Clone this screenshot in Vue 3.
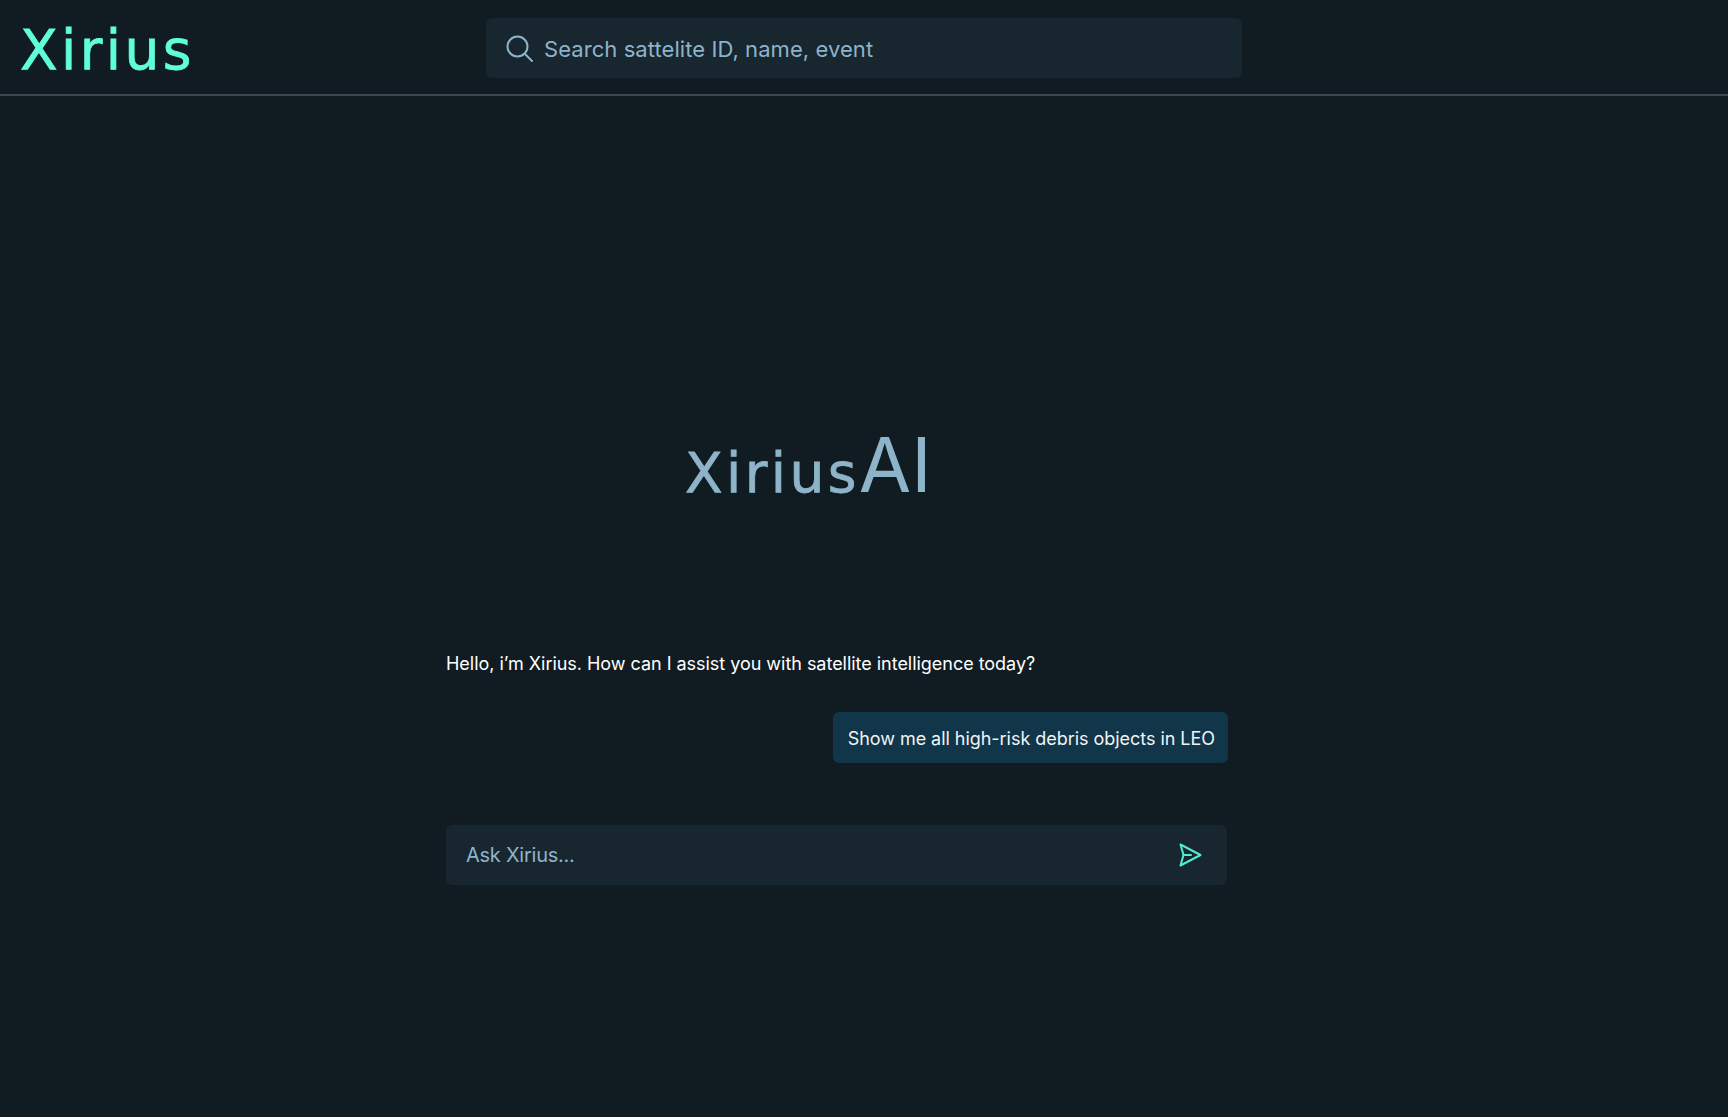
<script setup>
const placeholder = 'Search sattelite ID, name, event'
</script>

<template>
  <div class="page">
    <header class="top">
      <div class="logo">Xirius</div>
      <div class="search">
        <svg class="search-icon" width="27" height="27" viewBox="0 0 27 27" fill="none" stroke="#8db4c9" stroke-width="2" stroke-linecap="round">
          <circle cx="11.5" cy="11.5" r="10" />
          <path d="M19 19 L26 26" />
        </svg>
        <span class="search-text">{{ placeholder }}</span>
      </div>
    </header>
    <main class="chat">
      <h1 class="title"><span class="title-brand">Xirius</span><span class="title-ai">AI</span></h1>
      <p class="hello">Hello, i’m Xirius. How can I assist you with satellite intelligence today?</p>
      <div class="bubble-row"><div class="bubble">Show me all high-risk debris objects in LEO</div></div>
      <div class="ask">
        <span class="ask-text">Ask Xirius...</span>
        <svg width="24" height="26" viewBox="0 0 24 26" fill="none" stroke="#54ecd0" stroke-width="2" stroke-linejoin="round" stroke-linecap="round">
          <path d="M2.5 2.5 L22.5 13 L2.5 23.5 L5.5 13 Z" />
          <path d="M5.5 13 L13 13" />
        </svg>
      </div>
    </main>
  </div>
</template>

<style>
html, body { margin: 0; background: #111c22; }
</style>

<style scoped>
.page {
  width: 1728px;
  height: 1117px;
  background: #111c22;
  font-family: Inter, "Liberation Sans", sans-serif;
  overflow: hidden;
}
.top {
  height: 94px;
  border-bottom: 2px solid #3c4650;
  display: flex;
  align-items: flex-start;
}
.logo {
  width: 486px;
  padding: 17px 0 0 20px;
  box-sizing: border-box;
  font-family: "DejaVu Sans", sans-serif;
  font-size: 55px;
  line-height: 66px;
  letter-spacing: 3.4px;
  color: #5fffd9;
  -webkit-text-stroke: 0.8px #5fffd9;
}
.search {
  margin-top: 18px;
  width: 756px;
  height: 60px;
  background: #18262f;
  border-radius: 6px;
  display: flex;
  align-items: center;
  padding-left: 20px;
  box-sizing: border-box;
  gap: 11px;
}
.search-text {
  font-size: 22px;
  letter-spacing: 0.07px;
  color: #8db4c9;
  position: relative;
  top: 1px;
}
.chat {
  width: 781px;
  margin-left: 446px;
}
.title {
  margin: 328px 0 0 239px;
  font-weight: 400;
  display: flex;
  align-items: baseline;
  height: 80px;
  line-height: 80px;
  color: #8db4c9;
}
.title-brand {
  font-family: "DejaVu Sans", sans-serif;
  font-size: 55px;
  letter-spacing: 3.4px;
  -webkit-text-stroke: 0.8px #8db4c9;
}
.title-ai { font-size: 76px; margin-left: -1px; }
.hello {
  margin: 147px 0 0;
  font-size: 18px;
  line-height: 26px;
  letter-spacing: -0.03px;
  color: #fff;
}
.bubble-row { display: flex; justify-content: flex-end; margin: 35px -1px 0 0; }
.bubble {
  height: 51px;
  line-height: 53px;
  padding: 0 13px 0 15px;
  background: #11364a;
  border-radius: 6px;
  font-size: 18px;
  letter-spacing: -0.04px;
  color: #f0f4f6;
  white-space: nowrap;
}
.ask {
  margin-top: 62px;
  height: 60px;
  background: #18262f;
  border-radius: 6px;
  display: flex;
  align-items: center;
  justify-content: space-between;
  padding: 0 25px 0 20px;
}
.ask-text { font-size: 20px; letter-spacing: -0.25px; color: #8db4c9; }
</style>
